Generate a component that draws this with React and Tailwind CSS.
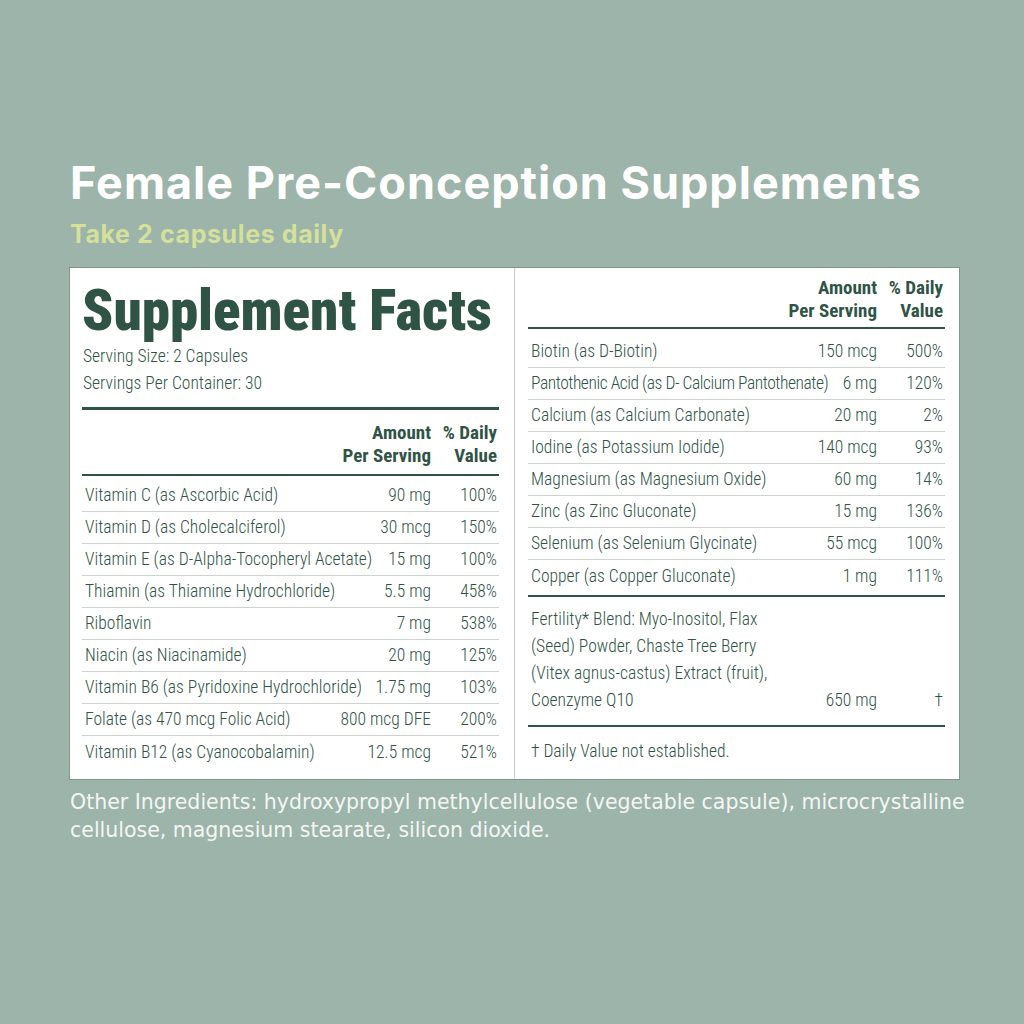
const leftRows = [
  ["Vitamin C (as Ascorbic Acid)", "90 mg", "100%"],
  ["Vitamin D (as Cholecalciferol)", "30 mcg", "150%"],
  ["Vitamin E (as D-Alpha-Tocopheryl Acetate)", "15 mg", "100%"],
  ["Thiamin (as Thiamine Hydrochloride)", "5.5 mg", "458%"],
  ["Riboflavin", "7 mg", "538%"],
  ["Niacin (as Niacinamide)", "20 mg", "125%"],
  ["Vitamin B6 (as Pyridoxine Hydrochloride)", "1.75 mg", "103%"],
  ["Folate (as 470 mcg Folic Acid)", "800 mcg DFE", "200%"],
  ["Vitamin B12 (as Cyanocobalamin)", "12.5 mcg", "521%"],
];

const rightRows = [
  ["Biotin (as D-Biotin)", "150 mcg", "500%"],
  ["Pantothenic Acid (as D- Calcium Pantothenate)", "6 mg", "120%", true],
  ["Calcium (as Calcium Carbonate)", "20 mg", "2%"],
  ["Iodine (as Potassium Iodide)", "140 mcg", "93%"],
  ["Magnesium (as Magnesium Oxide)", "60 mg", "14%"],
  ["Zinc (as Zinc Gluconate)", "15 mg", "136%"],
  ["Selenium (as Selenium Glycinate)", "55 mcg", "100%"],
  ["Copper (as Copper Gluconate)", "1 mg", "111%"],
];

function Row({ name, amount, dv, tight, last }) {
  return (
    <div className={`flex items-center h-[32px] ${last ? "" : "border-b border-[#cdd4d0]"}`}>
      <span className={`flex-1 min-w-0 whitespace-nowrap pl-[3px] ${tight ? "tracking-[-0.45px]" : ""}`}>
        {name}
      </span>
      <span className="shrink-0 whitespace-nowrap text-right">{amount}</span>
      <span className="w-[68px] shrink-0 pr-[2px] text-right">{dv}</span>
    </div>
  );
}

function ColumnHead() {
  return (
    <div className="flex justify-end font-bold text-[19px] leading-[23px] text-right whitespace-nowrap">
      <div>Amount<br />Per Serving</div>
      <div className="w-[68px] pr-[2px]">% Daily<br />Value</div>
    </div>
  );
}

export default function App() {
  return (
    <div className="w-[1024px] h-[1024px] bg-[#9cb4a9] pt-[157px] pl-[69px] font-['Inter',sans-serif]">
      <h1 className="text-white font-bold text-[45px] leading-[52px] tracking-[1px] pl-[1px]">
        Female Pre-Conception Supplements
      </h1>
      <p className="text-[#d5e09b] font-bold text-[25px] leading-[30px] tracking-[0.6px] pl-[1px] mt-[10px]">
        Take 2 capsules daily
      </p>

      <div className="mt-[18px] w-[891px] h-[513px] bg-white border border-[#7f988e] flex text-[#2f5446] font-['Roboto_Condensed',sans-serif] font-light text-[17.5px]">
        <div className="w-[445px] shrink-0 border-r border-[#c9cccb] pl-[12px] pr-[15px]">
          <h2 className="font-black text-[57px] leading-[65px] mt-[10px] whitespace-nowrap">
            Supplement Facts
          </h2>
          <div className="leading-[27px] pl-[1px]">
            <div>Serving Size: 2 Capsules</div>
            <div>Servings Per Container: 30</div>
          </div>
          <div className="h-[3px] bg-[#2f5446] mt-[10px]" />
          <div className="pt-[11px] pb-[7px]">
            <ColumnHead />
          </div>
          <div className="h-[2px] bg-[#2f5446]" />
          <div className="mt-[4px]">
            {leftRows.map((r, i) => (
              <Row key={r[0]} name={r[0]} amount={r[1]} dv={r[2]} last={i === leftRows.length - 1} />
            ))}
          </div>
        </div>

        <div className="flex-1 min-w-0 pl-[13px] pr-[14px]">
          <div className="pt-[8px] pb-[5px]">
            <ColumnHead />
          </div>
          <div className="h-[2px] bg-[#2f5446]" />
          <div className="mt-[7px]">
            {rightRows.map((r, i) => (
              <Row
                key={r[0]}
                name={r[0]}
                amount={r[1]}
                dv={r[2]}
                tight={r[3]}
                last={i === rightRows.length - 1}
              />
            ))}
          </div>
          <div className="h-[2px] bg-[#2f5446] mt-[3px]" />
          <div className="flex items-end leading-[27px] pt-[9px] pb-[11px]">
            <span className="flex-1 pl-[3px]">
              Fertility* Blend: Myo-Inositol, Flax<br />
              (Seed) Powder, Chaste Tree Berry<br />
              (Vitex agnus-castus) Extract (fruit),<br />
              Coenzyme Q10
            </span>
            <span className="shrink-0 text-right">650 mg</span>
            <span className="w-[68px] shrink-0 pr-[2px] text-right">†</span>
          </div>
          <div className="h-[2px] bg-[#2f5446]" />
          <div className="pt-[12px] pl-[3px] leading-[24px]">† Daily Value not established.</div>
        </div>
      </div>

      <p className="text-[#f4f6f4] font-['DejaVu_Sans',sans-serif] text-[20.5px] leading-[28px] mt-[8px] pl-[1px] whitespace-nowrap">
        Other Ingredients: hydroxypropyl methylcellulose (vegetable capsule), microcrystalline
        <br />
        cellulose, magnesium stearate, silicon dioxide.
      </p>
    </div>
  );
}
